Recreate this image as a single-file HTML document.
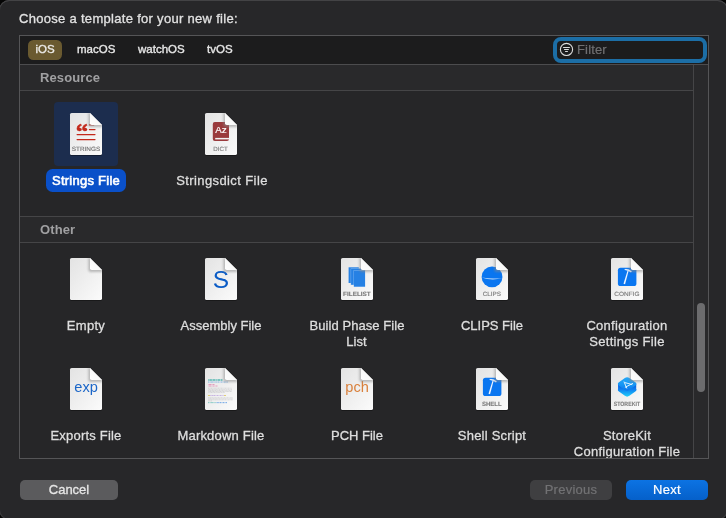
<!DOCTYPE html>
<html lang="en">
<head>
<meta charset="utf-8">
<title>Choose a template</title>
<style>
html,body{margin:0;padding:0;}
body{width:726px;height:518px;background:#050505;overflow:hidden;position:relative;
  font-family:"Liberation Sans",sans-serif;font-size:13px;color:#dfdfdf;}
.abs{position:absolute;}
svg.abs,div.abs{will-change:transform;}
#win{left:-1px;top:0;width:729px;height:519.5px;background:#272729;border-radius:10.5px;
  box-shadow:inset 0 1px 0 0 #434345, inset 0 0 0 1px #3a3a3c;}
#title{left:19.4px;top:11px;height:16px;line-height:16px;font-size:13px;color:#e2e2e2;white-space:nowrap;letter-spacing:0.3px;-webkit-text-stroke:0.3px #e2e2e2;}
#panel{left:19px;top:35px;width:690px;height:424px;box-sizing:border-box;border:1px solid #555557;background:#262628;}
.headbg{left:20px;width:673px;height:25px;background:#29292b;}
#tabbar{left:20px;top:36px;width:688px;height:28px;background:#1c1c1d;}
#tabline{left:20px;top:64px;width:688px;height:1px;background:#4c4c4e;}
.tab{top:40px;height:20px;line-height:19px;font-size:11.5px;color:#e6e6e6;white-space:nowrap;-webkit-text-stroke:0.35px #e6e6e6;}
#tab-ios{left:28px;width:34px;text-align:center;background:#6a5a30;border-radius:5.5px;color:#f3f0e6;}
#filter{left:553px;top:37px;width:154px;height:26px;box-sizing:border-box;border:4px solid #1c6ea6;border-radius:8px;background:#1c1c1d;}
#filtertxt{left:577px;letter-spacing:0.15px;top:42px;height:16px;line-height:16px;font-size:13px;color:#707072;-webkit-text-stroke:0.2px #707072;}
.hline{left:20px;width:674px;height:1px;background:#454547;}
.sechead{left:39.9px;height:16px;line-height:16px;font-weight:bold;font-size:13px;color:#a0a0a2;letter-spacing:0.1px;}
#track{left:693px;top:65px;width:15px;height:393px;background:#29292b;border-left:1px solid #454547;box-sizing:border-box;}
#thumb{left:697px;top:303px;width:8px;height:89px;border-radius:4px;background:#6c6c6e;}
.lbl{width:160px;text-align:center;font-size:13px;line-height:16px;color:#dedede;-webkit-text-stroke:0.3px #dedede;}
.lblsel{left:46.3px;top:169px;width:79.7px;height:22.5px;border-radius:6.5px;background:#0a50c9;}
.lblseltxt{left:35.8px;top:173px;width:100px;color:#fff;font-weight:normal;-webkit-text-stroke:0.6px #fff;line-height:16px;text-align:center;font-size:13px;letter-spacing:0.25px;}
.selbg{left:54px;top:102px;width:64px;height:64px;border-radius:4px;background:#1c2d4e;}
.btn{top:480px;height:20px;border-radius:5px;text-align:center;line-height:20px;font-size:13px;}
#cancel{left:20px;width:98px;background:#5b5b5d;color:#e6e6e6;-webkit-text-stroke:0.3px #e6e6e6;}
#prev{left:530px;width:82px;letter-spacing:0.25px;background:#3f3f41;color:#727274;-webkit-text-stroke:0.2px #727274;}
#next{left:626px;width:82px;background:linear-gradient(#0c73e3,#0560ca);letter-spacing:0.3px;color:#fff;-webkit-text-stroke:0.2px #fff;}
#clip{left:20px;top:65px;width:673px;height:393px;overflow:hidden;}
</style>
</head>
<body>
<svg class="abs" width="0" height="0" style="left:0;top:0">
  <defs>
    <linearGradient id="docg" x1="0" y1="0" x2="1" y2="1">
      <stop offset="0" stop-color="#e3e3e3"/><stop offset="1" stop-color="#fbfbfb"/>
    </linearGradient>
    <linearGradient id="flapg" x1="0" y1="1" x2="1" y2="0">
      <stop offset="0" stop-color="#ffffff"/><stop offset="0.5" stop-color="#f8f8f8"/><stop offset="1" stop-color="#ebebeb"/>
    </linearGradient>
    <linearGradient id="skside" gradientUnits="userSpaceOnUse" x1="0" y1="17" x2="0" y2="28.5">
      <stop offset="0" stop-color="#0a5ce2"/><stop offset="0.45" stop-color="#0f86f2"/><stop offset="1" stop-color="#22d6fa"/>
    </linearGradient>
    <linearGradient id="skbot" x1="0" y1="0" x2="1" y2="1">
      <stop offset="0.09" stop-color="#0a5ce2"/><stop offset="0.5" stop-color="#0f86f2"/><stop offset="1" stop-color="#22d6fa"/>
    </linearGradient>
    <linearGradient id="sktop" x1="0" y1="0" x2="1" y2="1">
      <stop offset="0" stop-color="#27aaf8"/><stop offset="0.55" stop-color="#1696f4"/><stop offset="1" stop-color="#0b70ea"/>
    </linearGradient>
    <filter id="blur1" x="-20%" y="-20%" width="140%" height="140%"><feGaussianBlur stdDeviation="0.7"/></filter>
    <filter id="blur2" x="-30%" y="-30%" width="160%" height="160%"><feGaussianBlur stdDeviation="1.1"/></filter>
    <clipPath id="bodyclip"><path d="M1.6 0 H20 L32 12 V40.4 Q32 42 30.4 42 H1.6 Q0 42 0 40.4 V1.6 Q0 0 1.6 0 Z"/></clipPath>
  </defs>
</svg>
<div id="win" class="abs"></div>
<div id="title" class="abs">Choose a template for your new file:</div>
<div id="panel" class="abs"></div>
<div id="tabbar" class="abs"></div>
<div id="tabline" class="abs"></div>
<div id="tab-ios" class="abs tab">iOS</div>
<div class="abs tab" style="left:77px">macOS</div>
<div class="abs tab" style="left:138px">watchOS</div>
<div class="abs tab" style="left:207px">tvOS</div>
<div id="filter" class="abs"></div>
<svg class="abs" style="left:559px;top:42px" width="15" height="15" viewBox="0 0 15 15">
  <circle cx="7.5" cy="7.45" r="6.1" fill="none" stroke="#dcdcdc" stroke-width="1.1"/>
  <rect x="3.95" y="4.95" width="7" height="1.05" rx="0.4" fill="#dcdcdc"/>
  <rect x="4.95" y="6.95" width="5" height="1.05" rx="0.4" fill="#dcdcdc"/>
  <rect x="5.95" y="8.95" width="3.05" height="1.05" rx="0.4" fill="#dcdcdc"/>
</svg>
<div id="filtertxt" class="abs">Filter</div>

<div id="track" class="abs"></div>
<div id="thumb" class="abs"></div>

<div class="abs headbg" style="top:65px"></div>
<div class="abs headbg" style="top:217px"></div>
<div class="abs sechead" style="top:70px">Resource</div>
<div class="abs hline" style="top:90px"></div>
<div class="abs hline" style="top:216px"></div>
<div class="abs sechead" style="top:222px;left:39.9px">Other</div>
<div class="abs hline" style="top:242px"></div>

<div class="abs selbg"></div>
<div class="abs lblsel"></div>
<div class="abs lblseltxt">Strings File</div>
<div class="abs lbl" style="left:141.6px;top:173px;letter-spacing:0.4px">Stringsdict File</div>

<div class="abs lbl" style="left:5.9px;top:318px;letter-spacing:0.3px">Empty</div>
<div class="abs lbl" style="left:141px;top:318px">Assembly File</div>
<div class="abs lbl" style="left:276.6px;top:318px;letter-spacing:0.07px">Build Phase File<br><span style="position:relative;left:-0.6px">List</span></div>
<div class="abs lbl" style="left:412.4px;top:318px">CLIPS File</div>
<div class="abs lbl" style="left:547px;top:318px;letter-spacing:0.3px">Configuration<br>Settings File</div>

<div id="clip" class="abs">
<div class="abs lbl" style="left:-14.4px;top:363px;letter-spacing:0.2px">Exports File</div>
<div class="abs lbl" style="left:121px;top:363px;letter-spacing:0.2px">Markdown File</div>
<div class="abs lbl" style="left:257px;top:363px">PCH File</div>
<div class="abs lbl" style="left:392px;top:363px;letter-spacing:0.22px">Shell Script</div>
<div class="abs lbl" style="left:527px;top:363px;letter-spacing:0.25px">StoreKit<br>Configuration File</div>
</div>

<svg class="abs" style="left:67px;top:110px" width="38" height="49" viewBox="-3 -3 38 49"><path d="M1.6 0 H20 L32 12 V40.4 Q32 42 30.4 42 H1.6 Q0 42 0 40.4 V1.6 Q0 0 1.6 0 Z" fill="#000" opacity="0.45" transform="translate(0,0.8)" filter="url(#blur1)"/><path d="M1.6 0 H20 L32 12 V40.4 Q32 42 30.4 42 H1.6 Q0 42 0 40.4 V1.6 Q0 0 1.6 0 Z" fill="url(#docg)"/><text transform="translate(-9.87,29.5) scale(1.127,0.86)" font-family="Noto Sans CJK SC, sans-serif" font-weight="bold" font-size="24.5" fill="#c3281b" stroke="#c3281b" stroke-width="0.4">“</text><rect x="18.8" y="11.3" width="5.5" height="1.3" rx="0.6" fill="#c3281b"/><rect x="18.8" y="15.9" width="6.8" height="1.3" rx="0.6" fill="#c3281b"/><rect x="6.5" y="20.9" width="19.1" height="1.3" rx="0.6" fill="#c3281b"/><rect x="6.5" y="25.9" width="19.1" height="1.3" rx="0.6" fill="#c3281b"/><text x="1.7" y="37.7" textLength="28.6" lengthAdjust="spacingAndGlyphs" text-rendering="geometricPrecision" font-family="Liberation Sans, sans-serif" font-size="6.2" font-weight="normal" fill="#707070" stroke="#707070" stroke-width="0.12">STRINGS</text><g clip-path="url(#bodyclip)"><path d="M19.2 -1 L33 12.8 L33 14 H21 Q18.4 14 18.4 11.4 V-1 Z" fill="#8a8a8a" opacity="0.55" filter="url(#blur2)"/></g><path d="M20 0 L32 12 H21.8 Q20 12 20 10.2 Z" fill="url(#flapg)"/></svg><svg class="abs" style="left:202px;top:110px" width="38" height="49" viewBox="-3 -3 38 49"><path d="M1.6 0 H20 L32 12 V40.4 Q32 42 30.4 42 H1.6 Q0 42 0 40.4 V1.6 Q0 0 1.6 0 Z" fill="#000" opacity="0.45" transform="translate(0,0.8)" filter="url(#blur1)"/><path d="M1.6 0 H20 L32 12 V40.4 Q32 42 30.4 42 H1.6 Q0 42 0 40.4 V1.6 Q0 0 1.6 0 Z" fill="url(#docg)"/><rect x="7.8" y="9.1" width="16.2" height="19" rx="2" fill="#9a3a3c"/><rect x="10.2" y="24.9" width="13.8" height="1.5" fill="#f2f2f2"/><text x="16" y="20.4" text-anchor="middle" font-family="Liberation Sans, sans-serif" font-size="9.8" fill="#ffffff" stroke="#ffffff" stroke-width="0.2">Az</text><text x="8.2" y="37.7" textLength="14.5" lengthAdjust="spacingAndGlyphs" text-rendering="geometricPrecision" font-family="Liberation Sans, sans-serif" font-size="6.2" font-weight="normal" fill="#7a7a7a" stroke="#7a7a7a" stroke-width="0.12">DICT</text><g clip-path="url(#bodyclip)"><path d="M19.2 -1 L33 12.8 L33 14 H21 Q18.4 14 18.4 11.4 V-1 Z" fill="#8a8a8a" opacity="0.55" filter="url(#blur2)"/></g><path d="M20 0 L32 12 H21.8 Q20 12 20 10.2 Z" fill="url(#flapg)"/></svg><svg class="abs" style="left:67px;top:255px" width="38" height="49" viewBox="-3 -3 38 49"><path d="M1.6 0 H20 L32 12 V40.4 Q32 42 30.4 42 H1.6 Q0 42 0 40.4 V1.6 Q0 0 1.6 0 Z" fill="#000" opacity="0.45" transform="translate(0,0.8)" filter="url(#blur1)"/><path d="M1.6 0 H20 L32 12 V40.4 Q32 42 30.4 42 H1.6 Q0 42 0 40.4 V1.6 Q0 0 1.6 0 Z" fill="url(#docg)"/><g clip-path="url(#bodyclip)"><path d="M19.2 -1 L33 12.8 L33 14 H21 Q18.4 14 18.4 11.4 V-1 Z" fill="#8a8a8a" opacity="0.55" filter="url(#blur2)"/></g><path d="M20 0 L32 12 H21.8 Q20 12 20 10.2 Z" fill="url(#flapg)"/></svg>
<svg class="abs" style="left:202px;top:255px" width="38" height="49" viewBox="-3 -3 38 49"><path d="M1.6 0 H20 L32 12 V40.4 Q32 42 30.4 42 H1.6 Q0 42 0 40.4 V1.6 Q0 0 1.6 0 Z" fill="#000" opacity="0.45" transform="translate(0,0.8)" filter="url(#blur1)"/><path d="M1.6 0 H20 L32 12 V40.4 Q32 42 30.4 42 H1.6 Q0 42 0 40.4 V1.6 Q0 0 1.6 0 Z" fill="url(#docg)"/><text x="15.9" y="30" text-anchor="middle" font-family="Liberation Sans, sans-serif" font-size="24.5" fill="#0b5cc6">S</text><g clip-path="url(#bodyclip)"><path d="M19.2 -1 L33 12.8 L33 14 H21 Q18.4 14 18.4 11.4 V-1 Z" fill="#8a8a8a" opacity="0.55" filter="url(#blur2)"/></g><path d="M20 0 L32 12 H21.8 Q20 12 20 10.2 Z" fill="url(#flapg)"/></svg>
<svg class="abs" style="left:338px;top:255px" width="38" height="49" viewBox="-3 -3 38 49"><path d="M1.6 0 H20 L32 12 V40.4 Q32 42 30.4 42 H1.6 Q0 42 0 40.4 V1.6 Q0 0 1.6 0 Z" fill="#000" opacity="0.45" transform="translate(0,0.8)" filter="url(#blur1)"/><path d="M1.6 0 H20 L32 12 V40.4 Q32 42 30.4 42 H1.6 Q0 42 0 40.4 V1.6 Q0 0 1.6 0 Z" fill="url(#docg)"/><rect x="7.6" y="9.3" width="10.2" height="15.7" fill="#2681e4"/><rect x="9.7" y="10.4" width="10.6" height="16.5" fill="#8fbef2"/><rect x="10.1" y="10.8" width="10.2" height="15.9" fill="#2681e4"/><rect x="12.6" y="12.1" width="11.6" height="16.6" fill="#8fbef2"/><rect x="13.0" y="12.5" width="11.0" height="16.1" fill="#2681e4"/><text x="2.1" y="37.7" textLength="27.6" lengthAdjust="spacingAndGlyphs" text-rendering="geometricPrecision" font-family="Liberation Sans, sans-serif" font-size="6.2" font-weight="bold" fill="#7a7a7a" stroke="#7a7a7a" stroke-width="0.12">FILELIST</text><g clip-path="url(#bodyclip)"><path d="M19.2 -1 L33 12.8 L33 14 H21 Q18.4 14 18.4 11.4 V-1 Z" fill="#8a8a8a" opacity="0.55" filter="url(#blur2)"/></g><path d="M20 0 L32 12 H21.8 Q20 12 20 10.2 Z" fill="url(#flapg)"/></svg>
<svg class="abs" style="left:473px;top:255px" width="38" height="49" viewBox="-3 -3 38 49"><path d="M1.6 0 H20 L32 12 V40.4 Q32 42 30.4 42 H1.6 Q0 42 0 40.4 V1.6 Q0 0 1.6 0 Z" fill="#000" opacity="0.45" transform="translate(0,0.8)" filter="url(#blur1)"/><path d="M1.6 0 H20 L32 12 V40.4 Q32 42 30.4 42 H1.6 Q0 42 0 40.4 V1.6 Q0 0 1.6 0 Z" fill="url(#docg)"/><circle cx="16.05" cy="18.9" r="10.4" fill="#0a76f0"/><path d="M5.7 19.5 Q16 21.3 26.4 20.0 Q16 23.1 5.7 19.5 Z" fill="#d8e9fc" opacity="0.9"/><text x="6.7" y="37.7" textLength="18.3" lengthAdjust="spacingAndGlyphs" text-rendering="geometricPrecision" font-family="Liberation Sans, sans-serif" font-size="6.2" font-weight="normal" fill="#787878" stroke="#787878" stroke-width="0.12">CLIPS</text><g clip-path="url(#bodyclip)"><path d="M19.2 -1 L33 12.8 L33 14 H21 Q18.4 14 18.4 11.4 V-1 Z" fill="#8a8a8a" opacity="0.55" filter="url(#blur2)"/></g><path d="M20 0 L32 12 H21.8 Q20 12 20 10.2 Z" fill="url(#flapg)"/></svg>
<svg class="abs" style="left:608px;top:255px" width="38" height="49" viewBox="-3 -3 38 49"><path d="M1.6 0 H20 L32 12 V40.4 Q32 42 30.4 42 H1.6 Q0 42 0 40.4 V1.6 Q0 0 1.6 0 Z" fill="#000" opacity="0.45" transform="translate(0,0.8)" filter="url(#blur1)"/><path d="M1.6 0 H20 L32 12 V40.4 Q32 42 30.4 42 H1.6 Q0 42 0 40.4 V1.6 Q0 0 1.6 0 Z" fill="url(#docg)"/><rect x="6.9" y="9.75" width="18.5" height="18.35" rx="2.6" fill="#0a76f0"/><path d="M12.5 25.65 L14.05 26.15 L17.65 12.8 L16.6 12.45 Z" fill="#eef4ff"/><path d="M13.7 11.15 Q17.2 10.7 20.6 13.15 L20.05 14.25 Q17.4 12.5 13.8 11.75 Z" fill="#eef4ff" stroke="#eef4ff" stroke-width="0.3" stroke-linejoin="round"/><text x="3.3" y="37.7" textLength="25.2" lengthAdjust="spacingAndGlyphs" text-rendering="geometricPrecision" font-family="Liberation Sans, sans-serif" font-size="6.2" font-weight="normal" fill="#787878" stroke="#787878" stroke-width="0.12">CONFIG</text><g clip-path="url(#bodyclip)"><path d="M19.2 -1 L33 12.8 L33 14 H21 Q18.4 14 18.4 11.4 V-1 Z" fill="#8a8a8a" opacity="0.55" filter="url(#blur2)"/></g><path d="M20 0 L32 12 H21.8 Q20 12 20 10.2 Z" fill="url(#flapg)"/></svg>
<svg class="abs" style="left:67px;top:365px" width="38" height="49" viewBox="-3 -3 38 49"><path d="M1.6 0 H20 L32 12 V40.4 Q32 42 30.4 42 H1.6 Q0 42 0 40.4 V1.6 Q0 0 1.6 0 Z" fill="#000" opacity="0.45" transform="translate(0,0.8)" filter="url(#blur1)"/><path d="M1.6 0 H20 L32 12 V40.4 Q32 42 30.4 42 H1.6 Q0 42 0 40.4 V1.6 Q0 0 1.6 0 Z" fill="url(#docg)"/><text x="16.1" y="24.4" text-anchor="middle" font-family="Liberation Sans, sans-serif" font-size="14.6" fill="#1b66c8">exp</text><g clip-path="url(#bodyclip)"><path d="M19.2 -1 L33 12.8 L33 14 H21 Q18.4 14 18.4 11.4 V-1 Z" fill="#8a8a8a" opacity="0.55" filter="url(#blur2)"/></g><path d="M20 0 L32 12 H21.8 Q20 12 20 10.2 Z" fill="url(#flapg)"/></svg>
<svg class="abs" style="left:202px;top:365px" width="38" height="49" viewBox="-3 -3 38 49"><path d="M1.6 0 H20 L32 12 V40.4 Q32 42 30.4 42 H1.6 Q0 42 0 40.4 V1.6 Q0 0 1.6 0 Z" fill="#000" opacity="0.45" transform="translate(0,0.8)" filter="url(#blur1)"/><path d="M1.6 0 H20 L32 12 V40.4 Q32 42 30.4 42 H1.6 Q0 42 0 40.4 V1.6 Q0 0 1.6 0 Z" fill="url(#docg)"/><line x1="3" y1="11.95" x2="17.5" y2="11.95" stroke="#3fb0a8" stroke-width="1.5" stroke-dasharray="0.8 0.5 2.6 0.5 3.2 0.5" stroke-dashoffset="0" opacity="0.85"/><line x1="3" y1="14.05" x2="23" y2="14.05" stroke="#4a90d8" stroke-width="0.9" stroke-dasharray="1.3 0.45 0.9 0.45 1.8 0.45 0.6 0.45" stroke-dashoffset="0" opacity="0.7"/><line x1="3" y1="16.50" x2="9.5" y2="16.50" stroke="#e0609a" stroke-width="0.8" stroke-dasharray="0.5 0.4 2.2 0.4" stroke-dashoffset="0" opacity="0.7"/><line x1="3" y1="18.00" x2="12.5" y2="18.00" stroke="#e0609a" stroke-width="0.8" stroke-dasharray="0.5 0.4 2.2 0.4" stroke-dashoffset="0" opacity="0.7"/><line x1="3" y1="20.20" x2="27" y2="20.20" stroke="#85858c" stroke-width="0.6" stroke-dasharray="1.1 0.4 0.7 0.4 1.6 0.4 0.5 0.4 1.3 0.4" stroke-dashoffset="0.0" opacity="0.42"/><line x1="3" y1="21.30" x2="27" y2="21.30" stroke="#85858c" stroke-width="0.6" stroke-dasharray="1.1 0.4 0.7 0.4 1.6 0.4 0.5 0.4 1.3 0.4" stroke-dashoffset="1.7" opacity="0.42"/><line x1="3" y1="22.40" x2="27" y2="22.40" stroke="#85858c" stroke-width="0.6" stroke-dasharray="1.1 0.4 0.7 0.4 1.6 0.4 0.5 0.4 1.3 0.4" stroke-dashoffset="3.4" opacity="0.42"/><line x1="3" y1="23.50" x2="27" y2="23.50" stroke="#85858c" stroke-width="0.6" stroke-dasharray="1.1 0.4 0.7 0.4 1.6 0.4 0.5 0.4 1.3 0.4" stroke-dashoffset="5.1" opacity="0.42"/><line x1="3" y1="24.60" x2="20" y2="24.60" stroke="#85858c" stroke-width="0.6" stroke-dasharray="1.1 0.4 0.7 0.4 1.6 0.4 0.5 0.4 1.3 0.4" stroke-dashoffset="6.8" opacity="0.42"/><line x1="3" y1="27.55" x2="5" y2="27.55" stroke="#d8c040" stroke-width="0.9" stroke-dasharray="none" stroke-dashoffset="0" opacity="0.8"/><line x1="5.3" y1="27.55" x2="18.7" y2="27.55" stroke="#a884d8" stroke-width="0.9" stroke-dasharray="1.3 0.45 0.9 0.45 1.8 0.45 0.6 0.45" stroke-dashoffset="0" opacity="0.65"/><line x1="19" y1="27.55" x2="21" y2="27.55" stroke="#d8c040" stroke-width="0.9" stroke-dasharray="none" stroke-dashoffset="0" opacity="0.8"/><line x1="3" y1="29.70" x2="28" y2="29.70" stroke="#85858c" stroke-width="0.6" stroke-dasharray="0.9 0.4 1.5 0.4 0.6 0.4 1.2 0.4" stroke-dashoffset="0.0" opacity="0.4"/><line x1="3" y1="30.80" x2="28" y2="30.80" stroke="#85858c" stroke-width="0.6" stroke-dasharray="0.9 0.4 1.5 0.4 0.6 0.4 1.2 0.4" stroke-dashoffset="2.3" opacity="0.4"/><line x1="3" y1="31.90" x2="28" y2="31.90" stroke="#85858c" stroke-width="0.6" stroke-dasharray="0.9 0.4 1.5 0.4 0.6 0.4 1.2 0.4" stroke-dashoffset="4.6" opacity="0.4"/><line x1="3" y1="33.00" x2="7" y2="33.00" stroke="#85858c" stroke-width="0.6" stroke-dasharray="0.9 0.4 1.5 0.4 0.6 0.4 1.2 0.4" stroke-dashoffset="6.8999999999999995" opacity="0.4"/><line x1="3" y1="34.65" x2="11" y2="34.65" stroke="#3fb0a8" stroke-width="0.9" stroke-dasharray="1.3 0.45 0.9 0.45 1.8 0.45 0.6 0.45" stroke-dashoffset="0" opacity="0.7"/><line x1="11.5" y1="34.65" x2="22.0" y2="34.65" stroke="#3a86e0" stroke-width="0.9" stroke-dasharray="1.3 0.45 0.9 0.45 1.8 0.45 0.6 0.45" stroke-dashoffset="0" opacity="0.8"/><g clip-path="url(#bodyclip)"><path d="M19.2 -1 L33 12.8 L33 14 H21 Q18.4 14 18.4 11.4 V-1 Z" fill="#8a8a8a" opacity="0.55" filter="url(#blur2)"/></g><path d="M20 0 L32 12 H21.8 Q20 12 20 10.2 Z" fill="url(#flapg)"/></svg>
<svg class="abs" style="left:338px;top:365px" width="38" height="49" viewBox="-3 -3 38 49"><path d="M1.6 0 H20 L32 12 V40.4 Q32 42 30.4 42 H1.6 Q0 42 0 40.4 V1.6 Q0 0 1.6 0 Z" fill="#000" opacity="0.45" transform="translate(0,0.8)" filter="url(#blur1)"/><path d="M1.6 0 H20 L32 12 V40.4 Q32 42 30.4 42 H1.6 Q0 42 0 40.4 V1.6 Q0 0 1.6 0 Z" fill="url(#docg)"/><text x="16.1" y="24.4" text-anchor="middle" font-family="Liberation Sans, sans-serif" font-size="14.6" fill="#d9803c">pch</text><g clip-path="url(#bodyclip)"><path d="M19.2 -1 L33 12.8 L33 14 H21 Q18.4 14 18.4 11.4 V-1 Z" fill="#8a8a8a" opacity="0.55" filter="url(#blur2)"/></g><path d="M20 0 L32 12 H21.8 Q20 12 20 10.2 Z" fill="url(#flapg)"/></svg>
<svg class="abs" style="left:473px;top:365px" width="38" height="49" viewBox="-3 -3 38 49"><path d="M1.6 0 H20 L32 12 V40.4 Q32 42 30.4 42 H1.6 Q0 42 0 40.4 V1.6 Q0 0 1.6 0 Z" fill="#000" opacity="0.45" transform="translate(0,0.8)" filter="url(#blur1)"/><path d="M1.6 0 H20 L32 12 V40.4 Q32 42 30.4 42 H1.6 Q0 42 0 40.4 V1.6 Q0 0 1.6 0 Z" fill="url(#docg)"/><rect x="6.9" y="9.75" width="18.5" height="18.35" rx="2.6" fill="#0a76f0"/><path d="M12.5 25.65 L14.05 26.15 L17.65 12.8 L16.6 12.45 Z" fill="#eef4ff"/><path d="M13.7 11.15 Q17.2 10.7 20.6 13.15 L20.05 14.25 Q17.4 12.5 13.8 11.75 Z" fill="#eef4ff" stroke="#eef4ff" stroke-width="0.3" stroke-linejoin="round"/><text x="5.9" y="37.7" textLength="19.7" lengthAdjust="spacingAndGlyphs" text-rendering="geometricPrecision" font-family="Liberation Sans, sans-serif" font-size="6.2" font-weight="bold" fill="#7c7c7c" stroke="#7c7c7c" stroke-width="0.12">SHELL</text><g clip-path="url(#bodyclip)"><path d="M19.2 -1 L33 12.8 L33 14 H21 Q18.4 14 18.4 11.4 V-1 Z" fill="#8a8a8a" opacity="0.55" filter="url(#blur2)"/></g><path d="M20 0 L32 12 H21.8 Q20 12 20 10.2 Z" fill="url(#flapg)"/></svg>
<svg class="abs" style="left:608px;top:365px" width="38" height="49" viewBox="-3 -3 38 49"><path d="M1.6 0 H20 L32 12 V40.4 Q32 42 30.4 42 H1.6 Q0 42 0 40.4 V1.6 Q0 0 1.6 0 Z" fill="#000" opacity="0.45" transform="translate(0,0.8)" filter="url(#blur1)"/><path d="M1.6 0 H20 L32 12 V40.4 Q32 42 30.4 42 H1.6 Q0 42 0 40.4 V1.6 Q0 0 1.6 0 Z" fill="url(#docg)"/><rect x="-7.4" y="-7.4" width="14.8" height="14.8" rx="3.2" transform="translate(16.13,21.9) scale(1,0.725) rotate(45)" fill="url(#skbot)"/><rect x="7.05" y="16" width="18.16" height="5.9" fill="url(#skside)"/><rect x="-7.4" y="-7.4" width="14.8" height="14.8" rx="3.2" transform="translate(16.13,16.0) scale(1,0.725) rotate(45)" fill="url(#sktop)"/><path d="M13.1 13.9 L15.7 20.1 M21.6 15.5 L14.3 19.2 M14.3 14.7 L20.9 16.5" stroke="#f2faff" stroke-width="0.95" stroke-linecap="round" fill="none" opacity="0.95"/><text x="2.7" y="37.7" textLength="26.4" lengthAdjust="spacingAndGlyphs" text-rendering="geometricPrecision" font-family="Liberation Sans, sans-serif" font-size="6.2" font-weight="bold" fill="#808080" stroke="#808080" stroke-width="0.12">STOREKIT</text><g clip-path="url(#bodyclip)"><path d="M19.2 -1 L33 12.8 L33 14 H21 Q18.4 14 18.4 11.4 V-1 Z" fill="#8a8a8a" opacity="0.55" filter="url(#blur2)"/></g><path d="M20 0 L32 12 H21.8 Q20 12 20 10.2 Z" fill="url(#flapg)"/></svg>


<div id="cancel" class="abs btn">Cancel</div>
<div id="prev" class="abs btn">Previous</div>
<div id="next" class="abs btn">Next</div>
</body>
</html>
